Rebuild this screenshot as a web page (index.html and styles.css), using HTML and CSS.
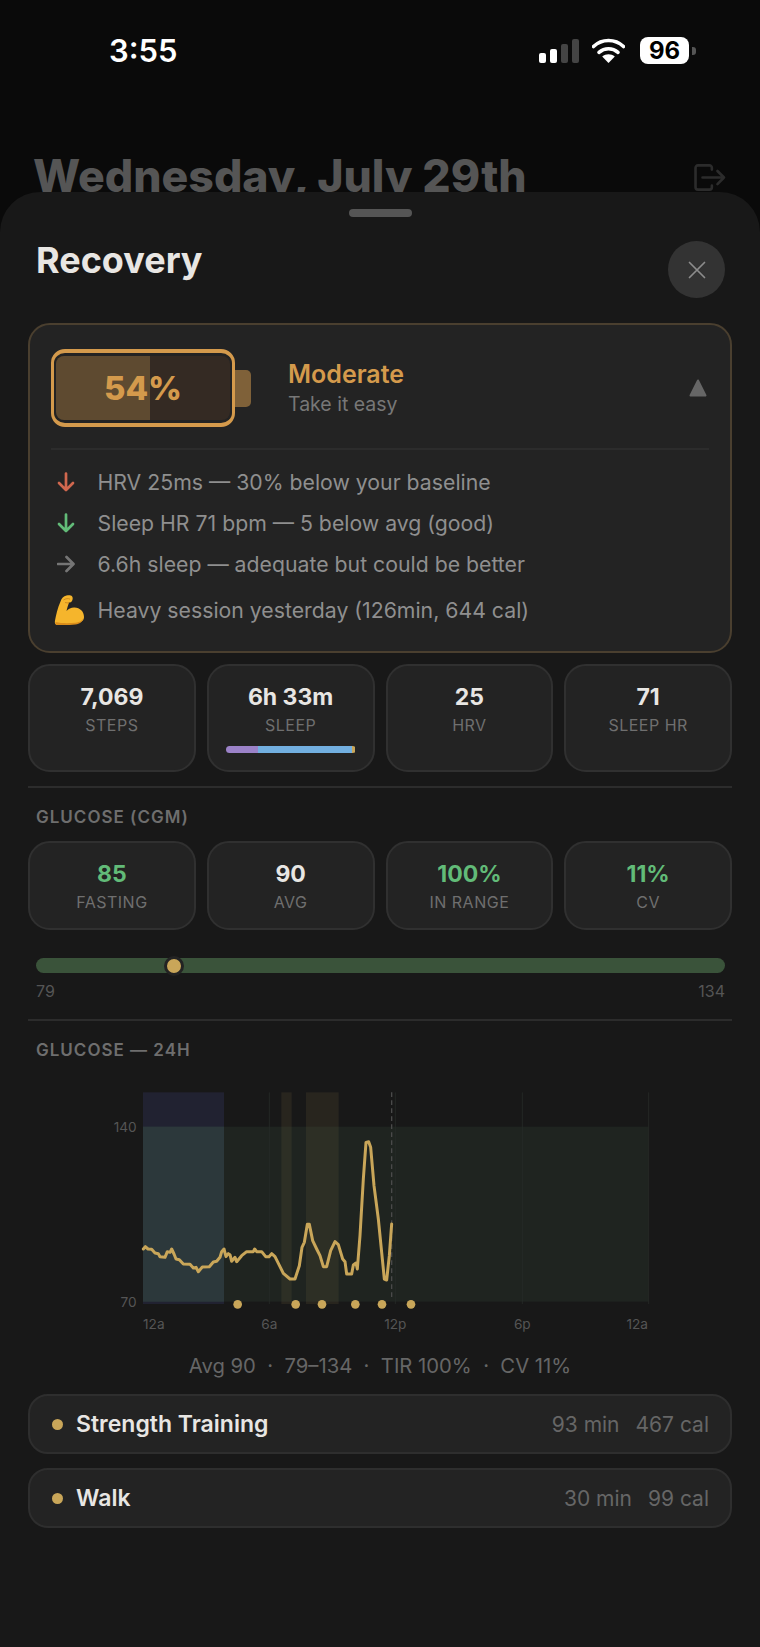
FILE: index.html

```html
<!DOCTYPE html>
<html lang="en">
<head>
  <meta charset="UTF-8" />
  <meta name="viewport" content="width=device-width, initial-scale=1.0" />
  <title>Recovery</title>
  <link rel="stylesheet" href="styles.css">
</head>
<body>
  <div class="status-bar">
    <span class="clock">3:55</span>
    <div class="status-icons">
      <div class="signal">
        <i class="on b1"></i><i class="on b2"></i><i class="b3"></i><i class="b4"></i>
      </div>
      <svg class="wifi" width="33" height="25" viewBox="0 0 33 25">
        <path d="M1.5 8.5C10 .5 23 .5 31.5 8.5" fill="none" stroke="#fff" stroke-width="3.6" stroke-linecap="round"/>
        <path d="M7 14.3c5.5-4.8 13.5-4.8 19 0" fill="none" stroke="#fff" stroke-width="3.6" stroke-linecap="round"/>
        <path d="M16.5 25l-6.3-6.4c3.6-3 9-3 12.6 0z" fill="#fff"/>
      </svg>
      <div class="phone-batt"><span>96</span></div>
      <i class="phone-nub"></i>
    </div>
  </div>

  <div class="day-row">
    <h1>Wednesday, July 29th</h1>
    <svg width="32" height="28" viewBox="0 0 34 30" fill="none" stroke="#2c2c2c" stroke-width="2.8" stroke-linecap="round" stroke-linejoin="round">
      <path d="M19 6V4a2.500 2.500 0 0 0-2.500-2.500H4A2.500 2.500 0 0 0 1.500 4v21A2.500 2.500 0 0 0 4 27.500h12.500A2.500 2.500 0 0 0 19 25v-2"/>
      <path d="M9 14.500h23M25 7.500l7 7-7 7"/>
    </svg>
  </div>

  <div class="sheet">
    <div class="handle"></div>
    <div class="sheet-head">
      <h2>Recovery</h2>
      <button class="close" aria-label="Close">
        <svg width="18" height="18" viewBox="0 0 18 18" stroke="#8c8c8c" stroke-width="1.7" stroke-linecap="round">
          <path d="M1.500 1.500l15 15M16.500 1.500l-15 15"/>
        </svg>
      </button>
    </div>

    <div class="recovery-card">
      <div class="recovery-top">
        <div class="battery">
          <div class="battery-body">
            <div class="battery-inner">
              <div class="battery-fill" style="width:54%"></div>
            </div>
            <span class="battery-text">54%</span>
          </div>
          <div class="battery-nub"></div>
        </div>
        <div class="recovery-label">
          <div class="level">Moderate</div>
          <div class="hint">Take it easy</div>
        </div>
        <svg class="caret" width="18" height="18" viewBox="0 0 18 18">
          <path d="M9 1.500L16.500 16.500H1.500z" fill="#666" stroke="#666" stroke-width="2" stroke-linejoin="round"/>
        </svg>
      </div>

      <div class="factors">
        <div class="factor">
          <svg class="factor-icon" width="18" height="20" viewBox="0 0 18 20" fill="none" stroke="#d0674e" stroke-width="2.7" stroke-linecap="round" stroke-linejoin="round">
            <path d="M9 1.500v16M2 11l7 7 7-7"/>
          </svg>
          <span>HRV 25ms — 30% below your baseline</span>
        </div>
        <div class="factor">
          <svg class="factor-icon" width="18" height="20" viewBox="0 0 18 20" fill="none" stroke="#62bb78" stroke-width="2.7" stroke-linecap="round" stroke-linejoin="round">
            <path d="M9 1.500v16M2 11l7 7 7-7"/>
          </svg>
          <span>Sleep HR 71 bpm — 5 below avg (good)</span>
        </div>
        <div class="factor">
          <svg class="factor-icon" width="18" height="20" viewBox="0 0 18 20" fill="none" stroke="#757575" stroke-width="2.7" stroke-linecap="round" stroke-linejoin="round">
            <path d="M1 10h15M9.500 3l7 7-7 7"/>
          </svg>
          <span>6.6h sleep — adequate but could be better</span>
        </div>
        <div class="factor factor-last">
          <svg class="factor-emoji" width="30" height="30" viewBox="0 0 30 30">
            <path d="M3 29.500C1 29.500.5 28 1 25.500 2 20 3.500 13 6.500 6.500 7.500 3 9.500 1.200 12.500.5c2.500-.5 4.500-.3 5.500.7 1 1.200.8 3 .2 4.300-.6 1.500-1.800 2.200-3.200 2.100-.8 2.500-1.800 5.500-2.500 8.500 2-2.300 5-3.700 8-3.500 5.500.2 9.500 4 9.500 9.300 0 3.500-3 5.800-7.500 6.300-6 .7-13.500.8-19.500.8z" fill="#f5b52c"/>
            <path d="M1.500 27c6 1.500 14 1.400 20 .7 3.500-.5 6.300-1.800 7.400-4-.2 3-3.200 5.300-7.400 5.800-6 .7-13 .8-18.500.8-1.200 0-1.700-1-1.500-3.300z" fill="#da8c1a"/>
            <path d="M9.500 5c2-1.500 5-1.800 6.500-.8M11 7.500c1.500.5 3 .5 4 .2" fill="none" stroke="#cf8a1c" stroke-width="1"/>
          </svg>
          <span>Heavy session yesterday (126min, 644 cal)</span>
        </div>
      </div>
    </div>

    <div class="stat-grid first">
      <div class="stat">
        <div class="stat-value">7,069</div>
        <div class="stat-label">STEPS</div>
      </div>
      <div class="stat">
        <div class="stat-value">6h 33m</div>
        <div class="stat-label">SLEEP</div>
        <div class="sleep-bar">
          <i class="deep" style="width:25%"></i>
          <i class="core" style="width:72%"></i>
          <i class="awake" style="width:3%"></i>
        </div>
      </div>
      <div class="stat">
        <div class="stat-value">25</div>
        <div class="stat-label">HRV</div>
      </div>
      <div class="stat">
        <div class="stat-value">71</div>
        <div class="stat-label">SLEEP HR</div>
      </div>
    </div>

    <hr class="rule first-rule">
    <div class="section-label">GLUCOSE (CGM)</div>

    <div class="stat-grid">
      <div class="stat">
        <div class="stat-value good">85</div>
        <div class="stat-label">FASTING</div>
      </div>
      <div class="stat">
        <div class="stat-value">90</div>
        <div class="stat-label">AVG</div>
      </div>
      <div class="stat">
        <div class="stat-value good">100%</div>
        <div class="stat-label">IN RANGE</div>
      </div>
      <div class="stat">
        <div class="stat-value good">11%</div>
        <div class="stat-label">CV</div>
      </div>
    </div>

    <div class="range">
      <div class="range-track">
        <div class="range-knob" style="left:20%"></div>
      </div>
      <div class="range-ends"><span>79</span><span>134</span></div>
    </div>

    <hr class="rule">
    <div class="section-label">GLUCOSE — 24H</div>

    <!-- units are a third of a pixel, so the trace could be read straight off a 3x crop -->
    <svg class="chart" width="590" height="260" viewBox="-30 0 1770 780">
      <rect x="69" y="40" width="243" height="635" fill="#24263a" opacity=".75"/>
      <rect x="484" y="40" width="31" height="635" fill="#2c2820" opacity=".85"/>
      <rect x="558" y="40" width="98" height="635" fill="#2c2820" opacity=".85"/>
      <rect x="69" y="143" width="1517" height="525" fill="#4b6b50" opacity=".15"/>
      <rect x="69" y="143" width="243" height="525" fill="#2c383b"/>

      <path d="M448 40V675M826 40V675M1207 40V675M1586 40V675" stroke="#272a28" stroke-width="2.5"/>
      <path d="M815 40V660" stroke="#4a4a4a" stroke-width="4" stroke-dasharray="14 10"/>

      <path fill="none" stroke="#c9a659" stroke-width="9" stroke-linejoin="round" stroke-linecap="round"
        d="M70 510L76 503 84 510 95 511 105 522 115 524 120 533 135 535 142 518 150 520 155 510 162 525 168 540 178 542 190 555 210 556 220 567 228 565 235 578 247 564 268 563 280 549 290 547 300 535 305 518 312 510 318 533 325 524 330 527 335 547 345 535 350 548 365 530 380 518 400 518 404 510 410 518 425 518 437 533 447 533 455 524 465 533 480 563 490 583 510 600 525 600 538 560 546 505 553 490 562 436 568 436 578 485 590 510 600 530 610 563 620 563 632 515 645 488 655 497 668 540 675 548 680 585 695 585 700 558 708 552 712 570 720 470 730 300 738 190 746 188 752 205 762 320 775 420 785 520 793 600 800 603 808 530 815 435"/>

      <g fill="#c9a659">
        <circle cx="353" cy="676" r="13"/>
        <circle cx="527" cy="676" r="13"/>
        <circle cx="606" cy="676" r="13"/>
        <circle cx="706" cy="676" r="13"/>
        <circle cx="786" cy="676" r="13"/>
        <circle cx="873" cy="676" r="13"/>
      </g>

      <g class="chart-text">
        <text x="50" y="160" text-anchor="end">140</text>
        <text x="50" y="684" text-anchor="end">70</text>
        <text x="69" y="749">12a</text>
        <text x="448" y="749" text-anchor="middle">6a</text>
        <text x="826" y="749" text-anchor="middle">12p</text>
        <text x="1207" y="749" text-anchor="middle">6p</text>
        <text x="1584" y="749" text-anchor="end">12a</text>
      </g>
    </svg>

    <div class="glucose-summary">Avg 90 &nbsp;·&nbsp; 79–134 &nbsp;·&nbsp; TIR 100% &nbsp;·&nbsp; CV 11%</div>

    <div class="workout">
      <i class="workout-dot"></i>
      <span class="workout-name">Strength Training</span>
      <span class="workout-meta">93 min</span>
      <span class="workout-meta">467 cal</span>
    </div>
    <div class="workout">
      <i class="workout-dot"></i>
      <span class="workout-name">Walk</span>
      <span class="workout-meta">30 min</span>
      <span class="workout-meta">99 cal</span>
    </div>
  </div>
</body>
</html>
```

FILE: styles.css

```css
* { box-sizing: border-box; }
html, body { margin: 0; height: 100%; }
body { position: relative; overflow: hidden; background: #0a0a0a; font-family: Inter, "Noto Sans", sans-serif; color: #e8e6e3; }

/* status bar */
.status-bar { display: flex; justify-content: space-between; align-items: flex-start; height: 148px; padding: 34px 64px 0 109px; }
.clock { font-size: 31px; line-height: 34px; font-weight: 600; color: #fff; }
.status-icons { display: flex; align-items: flex-start; }
.signal { display: flex; align-items: flex-end; gap: 4px; height: 24px; margin-top: 5px; margin-right: 13px; }
.signal i { display: block; width: 7px; border-radius: 2px; background: #444; }
.signal .on { background: #fff; }
.b1 { height: 10px; }
.b2 { height: 14px; }
.b3 { height: 19px; }
.b4 { height: 24px; }
.wifi { margin-top: 4px; margin-right: 15px; }
.phone-batt { display: flex; align-items: center; justify-content: center; width: 49px; height: 27px; margin-top: 3px; border-radius: 8px; background: #fff; }
.phone-batt span { font-size: 24px; font-weight: 700; color: #000; }
.phone-nub { display: block; width: 4px; height: 8px; margin: 13px 0 0 3px; border-radius: 0 3px 3px 0; background: #555; }

/* page behind the sheet */
.day-row { display: flex; justify-content: space-between; align-items: flex-start; padding: 0 34px 0 33px; }
.day-row h1 { margin: 0; font-size: 44.6px; line-height: 56px; font-weight: 800; color: #555; white-space: nowrap; }
.day-row svg { margin-top: 16px; }

/* bottom sheet */
.sheet { position: absolute; top: 192px; left: 0; right: 0; bottom: 0; padding: 17px 28px 0; border-radius: 40px 40px 0 0; background: #181818; }
.handle { width: 63px; height: 8px; margin: 0 auto; border-radius: 4px; background: #555; }
.sheet-head { display: flex; justify-content: space-between; align-items: flex-start; margin-top: 24px; padding: 0 7px 0 8px; }
.sheet-head h2 { margin: 0; font-size: 36px; line-height: 38px; font-weight: 700; color: #e8e6e3; }
.close { display: flex; align-items: center; justify-content: center; width: 57px; height: 57px; padding: 0; border: 0; border-radius: 50%; background: #333; }

.recovery-card { margin-top: 25px; padding: 24px 21px 21px; border: 2px solid #4a3f2f; border-radius: 22px; background: #232323; }
.recovery-top { display: flex; align-items: center; padding-bottom: 21px; border-bottom: 2px solid #2c2c2c; }
.battery { display: flex; align-items: center; }
.battery-body { position: relative; width: 184px; height: 78px; padding: 3px 2px; border: solid #d49a4c; border-width: 4px 3px; border-radius: 14px; background: #232323; }
.battery-inner { overflow: hidden; height: 100%; border-radius: 8px; background: #342a23; }
.battery-fill { height: 100%; background: #5e4a30; }
.battery-text { position: absolute; inset: 0; display: flex; align-items: center; justify-content: center; font-size: 33px; font-weight: 800; color: #d49a4c; }
.battery-nub { width: 16px; height: 37px; border-radius: 0 5px 5px 0; background: #7f6139; }
.recovery-label { flex: 1; margin-left: 37px; }
.level { font-size: 25px; line-height: 30px; font-weight: 600; color: #d49a4c; }
.hint { margin-top: 2px; font-size: 19.5px; line-height: 26px; color: #777; }
.caret { margin-right: 2px; }

.factors { padding-top: 16px; }
.factor { display: flex; align-items: center; height: 31px; margin-bottom: 10px; font-size: 21.25px; color: #8f8f8f; white-space: nowrap; }
.factor-last { height: 41px; margin-bottom: 0; }
.factor-icon { flex: none; width: 18px; margin: 0 22.5px 0 6px; }
.factor-emoji { flex: none; margin: 0 13.5px 0 3px; }

/* stat tiles */
.stat-grid { display: grid; grid-template-columns: repeat(4, 1fr); gap: 11px; }
.stat-grid.first { margin-top: 11px; }
.stat { padding: 17px 17px 15px; border: 2px solid #303030; border-radius: 22px; background: #232323; text-align: center; }
.stat-value { font-size: 23px; line-height: 28px; font-weight: 700; color: #e8e6e3; }
.stat-value.good { color: #62bb78; }
.stat-label { margin-top: 3px; font-size: 16px; line-height: 22px; letter-spacing: .5px; color: #6f6f6f; }
.sleep-bar { display: flex; overflow: hidden; height: 7px; margin: 10px 0 2px; border-radius: 4px; }
.sleep-bar i { display: block; height: 100%; }
.deep { background: #9b82c8; }
.core { background: #72afe0; }
.awake { background: #c9a659; }

.rule { height: 2px; margin: 14px 0 0; border: 0; background: #2c2c2c; }
.section-label { margin: 19px 0 14px 8px; font-size: 17px; line-height: 20px; font-weight: 600; letter-spacing: 1px; color: #6e6e6e; }

/* range bar */
.range { margin: 28px 7px 18px 8px; }
.range-track { position: relative; height: 15px; border-radius: 8px; background: #3a533a; }
.range-knob { position: absolute; top: 50%; width: 20px; height: 20px; margin: -10px 0 0 -10px; border: 3px solid #232323; border-radius: 50%; background: #c9a659; }
.range-ends { display: flex; justify-content: space-between; margin-top: 8px; font-size: 16px; line-height: 20px; color: #555; }

/* chart */
.chart { display: block; margin: 19px 0 0 82px; }
.chart-text text { font-family: Inter, sans-serif; font-size: 41px; fill: #555; }
.glucose-summary { margin-top: 13px; font-size: 20.25px; line-height: 28px; color: #666; text-align: center; }

/* workouts */
.workout { display: flex; align-items: center; height: 60px; margin-top: 14px; padding: 0 21px 0 22px; border: 2px solid #2e2e2e; border-radius: 20px; background: #232323; }
.workout-dot { display: block; flex: none; width: 11px; height: 11px; margin-right: 13px; border-radius: 50%; background: #c9a659; }
.workout-name { flex: 1; font-size: 23px; font-weight: 600; color: #e8e6e3; }
.workout-meta { margin-left: 16px; font-size: 21px; color: #666; }
```
